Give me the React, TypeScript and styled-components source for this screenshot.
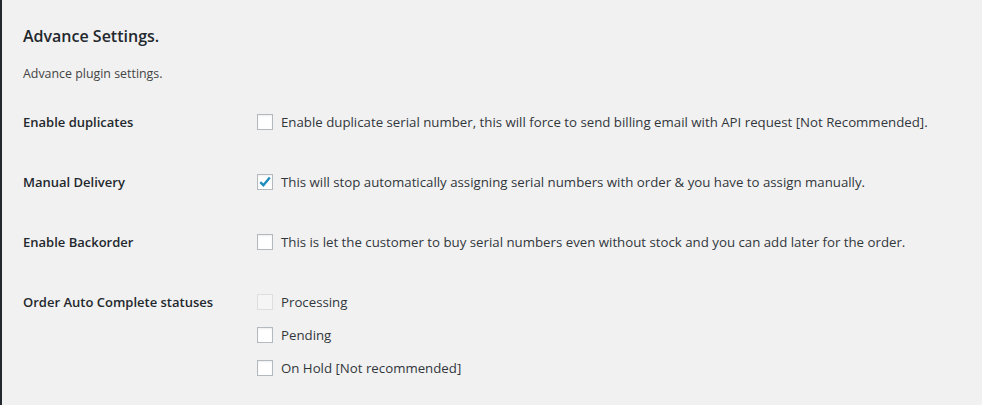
import { FC } from 'react';
import styled, { createGlobalStyle } from 'styled-components';

const GlobalStyle = createGlobalStyle`
  html, body {
    margin: 0;
    padding: 0;
    background: #f1f1f1;
  }
  body {
    font-family: "Open Sans", "Noto Sans", sans-serif;
    color: #23282d;
  }
`;

const Page = styled.div`
  min-height: 405px;
  box-sizing: border-box;
  border-left: 2px solid #23282d;
  padding: 25px 20px 0 21px;
`;

const Title = styled.h2`
  margin: 0;
  font-size: 16px;
  font-weight: 600;
  line-height: 22px;
  color: #23282d;
`;

const Description = styled.p`
  margin: 19px 0 0;
  font-size: 12.4px;
  line-height: 16px;
  color: #444;
`;

const Table = styled.div`
  display: flex;
  flex-direction: column;
  margin-top: 13px;
`;

const Row = styled.div`
  display: grid;
  grid-template-columns: 234px 1fr;
  padding: 17px 0 23px;
`;

const Label = styled.div`
  font-size: 13px;
  font-weight: 600;
  line-height: 20px;
  color: #23282d;
`;

const Options = styled.div`
  display: flex;
  flex-direction: column;
  gap: 13px;
`;

const Option = styled.label`
  display: flex;
  align-items: center;
  gap: 8px;
  font-size: 13.25px;
  line-height: 20px;
  color: #32373c;
`;

const Box = styled.span<{ $disabled?: boolean }>`
  width: 16px;
  height: 16px;
  box-sizing: border-box;
  flex: none;
  display: flex;
  align-items: center;
  justify-content: center;
  border: 1px solid ${(p) => (p.$disabled ? '#dedede' : '#b4b9be')};
  background: ${(p) => (p.$disabled ? 'rgba(255,255,255,0.3)' : '#fff')};
  box-shadow: ${(p) => (p.$disabled ? 'none' : 'inset 0 1px 2px rgba(0,0,0,0.07)')};
`;

const Check: FC = () => (
  <svg width="14" height="14" viewBox="0 0 14 14">
    <path d="M2.3 7.2 L5.4 10.2 L11.8 2.6" fill="none" stroke="#1e8cbe" strokeWidth="2.4" strokeLinejoin="miter" />
  </svg>
);

interface OptionItem {
  text: string;
  checked?: boolean;
  disabled?: boolean;
}

interface Setting {
  label: string;
  options: OptionItem[];
}

const settings: Setting[] = [
  {
    label: 'Enable duplicates',
    options: [
      {
        text: 'Enable duplicate serial number, this will force to send billing email with API request [Not Recommended].',
      },
    ],
  },
  {
    label: 'Manual Delivery',
    options: [
      {
        text: 'This will stop automatically assigning serial numbers with order & you have to assign manually.',
        checked: true,
      },
    ],
  },
  {
    label: 'Enable Backorder',
    options: [
      {
        text: 'This is let the customer to buy serial numbers even without stock and you can add later for the order.',
      },
    ],
  },
  {
    label: 'Order Auto Complete statuses',
    options: [
      { text: 'Processing', disabled: true },
      { text: 'Pending' },
      { text: 'On Hold [Not recommended]' },
    ],
  },
];

export default function App() {
  return (
    <>
      <GlobalStyle />
      <Page>
        <Title>Advance Settings.</Title>
        <Description>Advance plugin settings.</Description>
        <Table>
          {settings.map((s) => (
            <Row key={s.label}>
              <Label>{s.label}</Label>
              <Options>
                {s.options.map((o) => (
                  <Option key={o.text}>
                    <Box $disabled={o.disabled}>{o.checked && <Check />}</Box>
                    {o.text}
                  </Option>
                ))}
              </Options>
            </Row>
          ))}
        </Table>
      </Page>
    </>
  );
}
